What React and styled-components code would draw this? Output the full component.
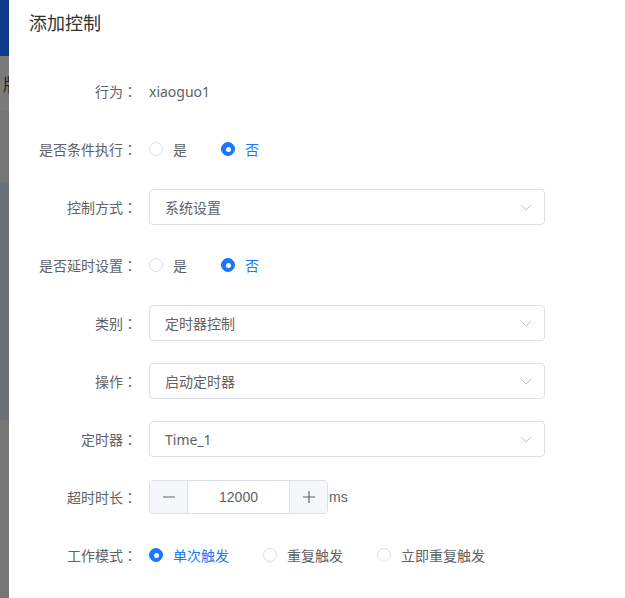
import React, { useState } from 'react'
import styled, { createGlobalStyle } from 'styled-components'

const GlobalStyle = createGlobalStyle`
  html, body {
    margin: 0;
    padding: 0;
    background: #ffffff;
  }
  body {
    font-family: "Noto Sans", "Noto Sans CJK SC", sans-serif;
    -webkit-font-smoothing: antialiased;
  }
`

const Page = styled.div`
  display: flex;
  width: 625px;
  height: 598px;
  overflow: hidden;
`

// dimmed page peeking out behind the dialog
const Backdrop = styled.div`
  width: 9px;
  flex-shrink: 0;
  display: flex;
  flex-direction: column;
  overflow: hidden;
`

const Band = styled.div`
  height: ${p => p.h}px;
  flex-shrink: 0;
  background: ${p => p.color};
  color: #262626;
  font-family: "Noto Sans CJK SC", sans-serif;
  font-size: 17px;
  line-height: 55px;
  white-space: nowrap;
  padding-left: 3px;
  ${p => p.grow && 'flex: 1;'}
`

const Dialog = styled.div`
  flex: 1;
  background: #fff;
  display: flex;
  flex-direction: column;
`

const Header = styled.div`
  padding: 10px 20px 0;
  height: 43px;
  box-sizing: border-box;
`

const Title = styled.span`
  font-size: 18px;
  line-height: 24px;
  color: #303133;
  font-family: "Noto Sans CJK SC", sans-serif;
`

const Form = styled.div`
  padding: 30px 20px 0 0;
  display: flex;
  flex-direction: column;
  gap: 22px;
`

const Item = styled.div`
  display: flex;
  align-items: center;
  height: 36px;
`

const Label = styled.label`
  width: 128px;
  padding-right: 12px;
  text-align: right;
  font-size: 14px;
  color: #606266;
  font-family: "Noto Sans CJK SC", sans-serif;
  flex-shrink: 0;
`

// centred full-width colon, as in the reference font
const Colon = styled.span`
  font-family: "Noto Sans CJK TC", sans-serif;
`

const Text = styled.span`
  font-size: 14px;
  color: #606266;
`

const Select = styled.div`
  width: 396px;
  height: 36px;
  box-sizing: border-box;
  border: 1px solid #dcdfe6;
  border-radius: 4px;
  display: flex;
  align-items: center;
  justify-content: space-between;
  padding: 0 12px 0 15px;
  font-size: 14px;
  color: #606266;
  font-family: "Noto Sans", "Noto Sans CJK SC", sans-serif;
`

const RadioGroup = styled.div`
  display: flex;
  align-items: center;
  gap: 34px;
`

const Radio = styled.div`
  display: flex;
  align-items: center;
  gap: 10px;
  font-size: 14px;
  cursor: pointer;
  color: ${p => (p.checked ? '#1677ff' : '#606266')};
  font-family: "Noto Sans CJK SC", sans-serif;
`

const Dot = styled.span`
  width: 14px;
  height: 14px;
  box-sizing: border-box;
  border-radius: 50%;
  border: 1px solid ${p => (p.checked ? '#1677ff' : '#dcdfe6')};
  background: ${p => (p.checked ? '#1677ff' : '#fff')};
  display: flex;
  align-items: center;
  justify-content: center;
  &::after {
    content: '';
    width: 5px;
    height: 5px;
    border-radius: 50%;
    background: #fff;
    display: ${p => (p.checked ? 'block' : 'none')};
  }
`

const NumberBox = styled.div`
  width: 179px;
  height: 34px;
  box-sizing: border-box;
  border: 1px solid #dcdfe6;
  border-radius: 4px;
  display: flex;
  overflow: hidden;
`

const StepBtn = styled.button`
  width: 38px;
  border: none;
  ${p => (p.side === 'left' ? 'border-right' : 'border-left')}: 1px solid #dcdfe6;
  background: #f5f7fa;
  color: #606266;
  display: flex;
  align-items: center;
  justify-content: center;
  padding: 0;
  cursor: pointer;
`

const NumberValue = styled.div`
  flex: 1;
  text-align: center;
  line-height: 32px;
  font-size: 14px;
  color: #606266;
  font-family: "Liberation Sans", sans-serif;
`

const Unit = styled.span`
  margin-left: 1px;
  font-size: 14px;
  color: #606266;
  font-family: "Liberation Sans", sans-serif;
`

const Chevron = () => (
  <svg width="12" height="7" viewBox="0 0 12 7" fill="none">
    <path d="M0.7 0.7 L6 6 L11.3 0.7" stroke="#c0c4cc" strokeWidth="1" />
  </svg>
)

function FieldLabel({ children }) {
  return (
    <Label>
      {children}
      <Colon>：</Colon>
    </Label>
  )
}

function RadioSet({ options, value, onChange }) {
  return (
    <RadioGroup>
      {options.map(o => (
        <Radio key={o} checked={value === o} onClick={() => onChange(o)}>
          <Dot checked={value === o} />
          {o}
        </Radio>
      ))}
    </RadioGroup>
  )
}

function App() {
  const [cond, setCond] = useState('否')
  const [delay, setDelay] = useState('否')
  const [mode, setMode] = useState('单次触发')
  const [timeout, setTimeoutVal] = useState(12000)

  const selects = [
    ['类别', '定时器控制'],
    ['操作', '启动定时器'],
    ['定时器', 'Time_1'],
  ]

  return (
    <>
      <GlobalStyle />
      <Page>
        <Backdrop>
          <Band h={56} color="#0e3a8c" />
          <Band h={55} color="#7b7b7b">版</Band>
          <Band h={71} color="#767676" />
          <Band h={238} color="#6c7079" />
          <Band grow color="#777777" />
        </Backdrop>
        <Dialog>
          <Header>
            <Title>添加控制</Title>
          </Header>
          <Form>
            <Item>
              <FieldLabel>行为</FieldLabel>
              <Text>xiaoguo1</Text>
            </Item>
            <Item>
              <FieldLabel>是否条件执行</FieldLabel>
              <RadioSet options={['是', '否']} value={cond} onChange={setCond} />
            </Item>
            <Item>
              <FieldLabel>控制方式</FieldLabel>
              <Select>
                <span>系统设置</span>
                <Chevron />
              </Select>
            </Item>
            <Item>
              <FieldLabel>是否延时设置</FieldLabel>
              <RadioSet options={['是', '否']} value={delay} onChange={setDelay} />
            </Item>
            {selects.map(([label, val]) => (
              <Item key={label}>
                <FieldLabel>{label}</FieldLabel>
                <Select>
                  <span>{val}</span>
                  <Chevron />
                </Select>
              </Item>
            ))}
            <Item>
              <FieldLabel>超时时长</FieldLabel>
              <NumberBox>
                <StepBtn side="left" onClick={() => setTimeoutVal(v => v - 1)}>
                  <svg width="14" height="14" viewBox="0 0 14 14">
                    <path d="M1 7 H13" stroke="#606266" strokeWidth="1.2" />
                  </svg>
                </StepBtn>
                <NumberValue>{timeout}</NumberValue>
                <StepBtn side="right" onClick={() => setTimeoutVal(v => v + 1)}>
                  <svg width="14" height="14" viewBox="0 0 14 14">
                    <path d="M1 7 H13 M7 1 V13" stroke="#606266" strokeWidth="1.2" />
                  </svg>
                </StepBtn>
              </NumberBox>
              <Unit>ms</Unit>
            </Item>
            <Item>
              <FieldLabel>工作模式</FieldLabel>
              <RadioSet
                options={['单次触发', '重复触发', '立即重复触发']}
                value={mode}
                onChange={setMode}
              />
            </Item>
          </Form>
        </Dialog>
      </Page>
    </>
  )
}

export default App
